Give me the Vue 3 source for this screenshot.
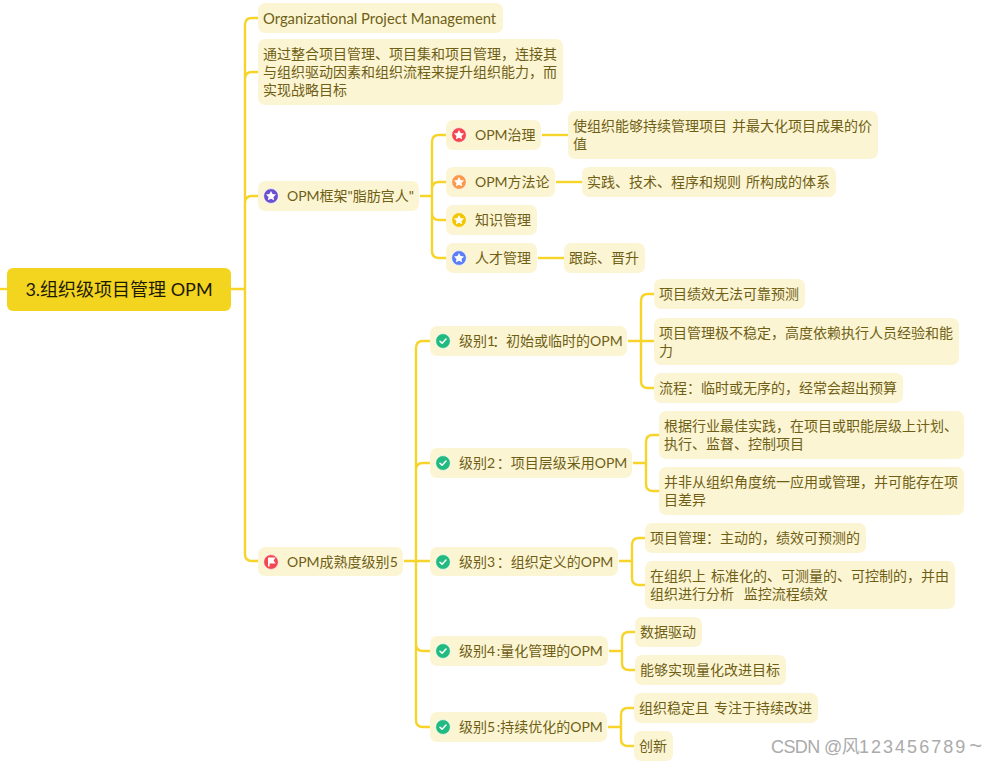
<script setup>
const nodes = [
  { x: 258, y: 3, w: 245, h: 30, t: 'Organizational Project Management', wide: true },
  { x: 258, y: 39, w: 305, h: 66, t: '通过整合项目管理、项目集和项目管理，连接其与组织驱动因素和组织流程来提升组织能力，而实现战略目标' },
  { x: 258, y: 181, w: 161, h: 30, t: 'OPM框架"脂肪宫人"', icon: 'star', c: '#6a4fd1' },
  { x: 446, y: 120, w: 95, h: 30, t: 'OPM治理', icon: 'star', c: '#f5474f' },
  { x: 568, y: 111, w: 310, h: 48, t: '使组织能够持续管理项目 并最大化项目成果的价值' },
  { x: 446, y: 167, w: 109, h: 30, t: 'OPM方法论', icon: 'star', c: '#fb9a4b' },
  { x: 582, y: 167, w: 254, h: 30, t: '实践、技术、程序和规则 所构成的体系' },
  { x: 446, y: 205, w: 91, h: 30, t: '知识管理', icon: 'star', c: '#f2c600' },
  { x: 446, y: 243, w: 91, h: 30, t: '人才管理', icon: 'star', c: '#5b7ef6' },
  { x: 564, y: 243, w: 81, h: 30, t: '跟踪、晋升' },
  { x: 258, y: 547, w: 145, h: 29, t: 'OPM成熟度级别5', icon: 'flag', c: '#f5474f' },
  { x: 430, y: 326, w: 197, h: 30, t: '级别1：初始或临时的OPM', icon: 'check', c: '#22ba80' },
  { x: 654, y: 279, w: 151, h: 30, t: '项目绩效无法可靠预测' },
  { x: 654, y: 318, w: 305, h: 47, t: '项目管理极不稳定，高度依赖执行人员经验和能力' },
  { x: 654, y: 373, w: 249, h: 30, t: '流程：临时或无序的，经常会超出预算' },
  { x: 430, y: 448, w: 202, h: 30, t: '级别2：项目层级采用OPM', icon: 'check', c: '#22ba80' },
  { x: 659, y: 411, w: 305, h: 48, t: '根据行业最佳实践，在项目或职能层级上计划、执行、监督、控制项目' },
  { x: 659, y: 467, w: 305, h: 48, t: '并非从组织角度统一应用或管理，并可能存在项目差异' },
  { x: 430, y: 547, w: 188, h: 29, t: '级别3：组织定义的OPM', icon: 'check', c: '#22ba80' },
  { x: 645, y: 523, w: 221, h: 30, t: '项目管理：主动的，绩效可预测的' },
  { x: 645, y: 561, w: 310, h: 48, t: '在组织上 标准化的、可测量的、可控制的，并由组织进行分析  监控流程绩效' },
  { x: 430, y: 636, w: 178, h: 30, t: '级别4:量化管理的OPM', icon: 'check', c: '#22ba80' },
  { x: 635, y: 617, w: 67, h: 30, t: '数据驱动' },
  { x: 635, y: 655, w: 151, h: 30, t: '能够实现量化改进目标' },
  { x: 430, y: 712, w: 177, h: 30, t: '级别5:持续优化的OPM', icon: 'check', c: '#22ba80' },
  { x: 634, y: 693, w: 184, h: 30, t: '组织稳定且 专注于持续改进' },
  { x: 634, y: 731, w: 39, h: 30, t: '创新' },
]

const groups = [
  { x: 231, y: 289, trunk: 245, end: 258, kids: [18, 72, 196, 561] },
  { x: 420, y: 196, trunk: 432, end: 446, kids: [135, 182, 220, 258] },
  { x: 404, y: 561, trunk: 416, end: 430, kids: [341, 463, 561, 651, 727] },
  { x: 628, y: 341, trunk: 641, end: 654, kids: [294, 341, 388] },
  { x: 633, y: 463, trunk: 646, end: 659, kids: [435, 491] },
  { x: 619, y: 561, trunk: 632, end: 645, kids: [538, 585] },
  { x: 609, y: 651, trunk: 622, end: 635, kids: [632, 670] },
  { x: 608, y: 727, trunk: 621, end: 634, kids: [708, 746] },
]

function groupPath(g) {
  const r = 7
  let d = `M${g.x} ${g.y}H${g.trunk}`
  for (const k of g.kids) {
    if (k === g.y) {
      d += `M${g.trunk} ${k}H${g.end}`
    } else {
      const s = k < g.y ? 1 : -1
      d += `M${g.trunk} ${g.y}V${k + s * r}Q${g.trunk} ${k} ${g.trunk + r} ${k}H${g.end}`
    }
  }
  return d
}

const paths = [
  'M0 289H7',
  'M542 135H568',
  'M556 182H582',
  'M538 258H564',
  ...groups.map(groupPath),
]

function boxStyle(n) {
  return { left: n.x + 'px', top: n.y + 'px', width: n.w + 'px', height: n.h + 'px' }
}

function parts(text) {
  return text.split(/([0-9])/).filter(Boolean)
}
function digitClass(p) {
  if (p === '1') return 'one'
  return /^[0-9]$/.test(p) ? 'digit' : ''
}
</script>

<template>
  <div class="map">
    <svg class="links" width="1002" height="765" viewBox="0 0 1002 765">
      <path v-for="(d, i) in paths" :key="i" :d="d" />
    </svg>
    <div class="root">3.组织级项目管理 OPM</div>
    <div v-for="(n, i) in nodes" :key="i" class="node" :style="boxStyle(n)">
      <svg v-if="n.icon" class="icon" width="16" height="16" viewBox="0 0 16 16">
        <circle cx="8" cy="8" r="7.4" :fill="n.c" stroke="#fff" stroke-opacity=".75" stroke-width="1" />
        <path v-if="n.icon === 'star'" fill="#fff" d="M8 3l1.55 3.1 3.45.45-2.5 2.4.6 3.4L8 10.75l-3.1 1.6.6-3.4L3 6.55l3.45-.45z" />
        <path v-else-if="n.icon === 'check'" fill="none" stroke="#fff" stroke-width="1.5" stroke-linecap="round" stroke-linejoin="round" d="M5 8.2l2.1 2.1L11 6" />
        <path v-else fill="#fff" d="M5 3.6h7.6l-2 3 2 3H6.6v3H5z" />
      </svg>
      <span class="label" :class="{ single: n.h <= 30, wide: n.wide }"><span v-for="(p, j) in parts(n.t)" :key="j" :class="digitClass(p)">{{ p }}</span></span>
    </div>
    <div class="mark"><span class="mark-head">CSDN @风</span><span class="mark-num">123456789</span><span class="mark-tail">~</span></div>
  </div>
</template>

<style scoped>
.map {
  position: relative;
  width: 1002px;
  height: 765px;
  overflow: hidden;
  background: #fff;
  font-family: Lato, "Noto Sans CJK SC", sans-serif;
}
.links {
  position: absolute;
  left: 0;
  top: 0;
}
.links path {
  fill: none;
  stroke: #f6d42a;
  stroke-width: 2.4;
}
.root {
  position: absolute;
  left: 7px;
  top: 268px;
  width: 224px;
  height: 43px;
  box-sizing: border-box;
  display: flex;
  align-items: center;
  justify-content: center;
  padding-bottom: 3px;
  border-radius: 6px;
  background: #f3d41f;
  color: #1d1a05;
  font-size: 18px;
  white-space: pre;
}
.node {
  position: absolute;
  box-sizing: border-box;
  display: flex;
  align-items: center;
  padding: 6px 5px;
  border-radius: 7px;
  background: #fcf5d3;
  color: #6f5f16;
  font-size: 14px;
  line-height: 18px;
}
.icon {
  flex: none;
  margin: 0 8.5px 0 -0.5px;
}
.label {
  min-width: 0;
  white-space: pre-wrap;
  word-break: break-all;
  word-spacing: 1.3px;
}
.label.single {
  white-space: pre;
}
.label.wide {
  font-size: 14.8px;
  word-spacing: 0;
}
.digit {
  letter-spacing: 1.6px;
}
.one {
  letter-spacing: -3px;
}
.mark {
  position: absolute;
  left: 771px;
  top: 735px;
  color: #ababab;
  font-family: "Liberation Sans", "Noto Sans CJK SC", sans-serif;
  font-size: 18px;
  line-height: 22px;
  white-space: nowrap;
}
.mark-head {
  letter-spacing: -0.6px;
}
.mark-num {
  letter-spacing: 2px;
}
.mark-tail {
  margin-left: 2px;
  font-size: 22px;
}
</style>
